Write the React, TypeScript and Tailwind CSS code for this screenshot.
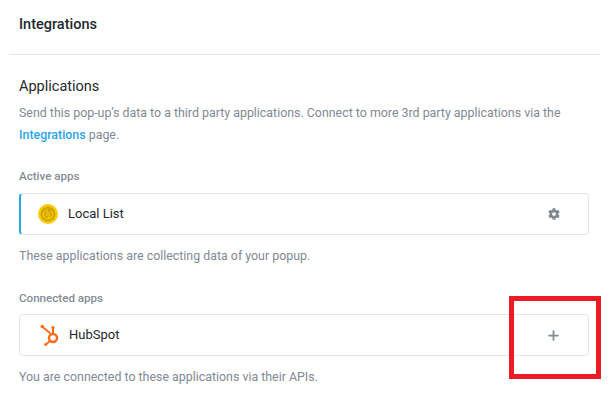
import { Plus } from 'lucide-react';
import { FaCog } from 'react-icons/fa';

function CoinIcon() {
  return (
    <svg width="20" height="20" viewBox="0 0 20 20">
      <circle cx="10" cy="10" r="10" fill="#f7cb00" />
      <circle cx="10" cy="10" r="7.5" fill="#d3a406" />
      <path d="M7 6.8a4.6 4.6 0 1 0 6 0" fill="none" stroke="#f7cb00" strokeWidth="1.2" />
      <path d="M9 5v7M11 8v7" fill="none" stroke="#f7cb00" strokeWidth="1.2" />
    </svg>
  );
}

function HubSpotIcon() {
  return (
    <svg width="20" height="22" viewBox="0 0 20 22" fill="none" stroke="#ff6a13">
      <circle cx="13" cy="14" r="4" strokeWidth="2.4" />
      <path d="M2 2.5 10.5 9.5" strokeWidth="1.8" />
      <path d="M13 9.5V4.5" strokeWidth="2" />
      <path d="M9.8 17 6.5 20" strokeWidth="1.8" />
      <circle cx="2.2" cy="2.4" r="1.7" fill="#ff6a13" stroke="none" />
      <circle cx="13" cy="3.6" r="1.7" fill="#ff6a13" stroke="none" />
      <circle cx="5.6" cy="20.4" r="1.5" fill="#ff6a13" stroke="none" />
    </svg>
  );
}

export default function App() {
  return (
    <div className="relative w-[610px] h-[400px] overflow-hidden bg-white font-['Roboto',sans-serif]">
      <div className="ml-[9px] mr-[10px] h-[55px] border-b border-[#e5e5e5] pl-[10px] pt-[15px]">
        <h1 className="text-[14.5px] leading-[20px] font-medium text-[#23282d]">Integrations</h1>
      </div>

      <div className="pl-[19px] pr-[21px] pt-[21px]">
        <h2 className="text-[14.5px] leading-[22px] text-[#23282d]">Applications</h2>
        <p className="mt-[4px] text-[12.4px] leading-[22px] text-[#7f8a94]">
          Send this pop-up’s data to a third party applications. Connect to more 3rd party applications via the{' '}
          <a className="font-medium text-[#2ba5e8]">Integrations</a> page.
        </p>

        <h3 className="mt-[21px] text-[11.6px] leading-[18px] font-medium text-[#848d96]">Active apps</h3>
        <div className="mt-[8px] flex h-[42px] items-center rounded-[4px] border border-l-2 border-[#e5e5e5] border-l-[#1fa9e6] pl-[17px] pr-[28px]">
          <CoinIcon />
          <span className="ml-[10px] text-[13px] text-[#23282d]">Local List</span>
          <FaCog className="ml-auto size-[12px] text-[#7f8a94]" />
        </div>
        <p className="mt-[10px] text-[12.4px] leading-[22px] text-[#7f8a94]">
          These applications are collecting data of your popup.
        </p>

        <h3 className="mt-[22px] text-[11.6px] leading-[18px] font-medium text-[#848d96]">Connected apps</h3>
        <div className="mt-[7px] flex h-[42px] items-center rounded-[4px] border border-[#e5e5e5] pl-[20px] pr-[27px]">
          <HubSpotIcon />
          <span className="ml-[9px] text-[13px] text-[#23282d]">HubSpot</span>
          <Plus className="ml-auto size-[15px] text-[#7f8a94]" strokeWidth={2.8} />
        </div>
        <p className="mt-[10px] text-[12.4px] leading-[22px] text-[#7f8a94]">
          You are connected to these applications via their APIs.
        </p>
      </div>

      <div className="absolute left-[509px] top-[296px] h-[83px] w-[92px] border-[5px] border-[#ed1c24]" />
    </div>
  );
}
